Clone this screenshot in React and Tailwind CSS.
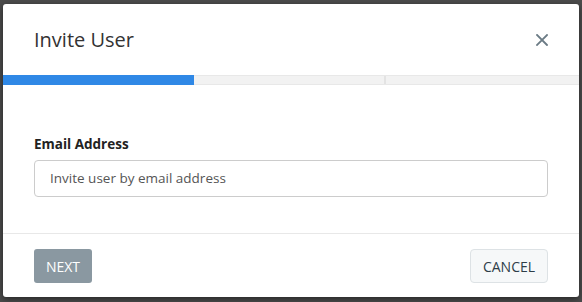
import React from "react";

export default function App() {
  return (
    <div className="w-[582px] h-[302px] bg-[#4b4b4b] pt-[4px] pl-[3px] overflow-hidden" style={{ fontFamily: '"Open Sans", sans-serif' }}>
      <div className="w-[576px] h-[293px] bg-white rounded-[3px] flex flex-col shadow-[0_2px_6px_rgba(0,0,0,0.5)]">
        <div className="h-[71px] flex items-center justify-between pl-[31px] pr-[30px]">
          <h1 className="text-[20px] font-normal text-[#333] leading-none mt-[1px]">Invite User</h1>
          <button className="text-[#6b7b85] w-[14px] h-[14px] flex items-center justify-center">
            <svg width="12" height="12" viewBox="0 0 12 12" fill="none" stroke="currentColor" strokeWidth="1.8" strokeLinecap="square">
              <path d="M1 1L11 11M11 1L1 11" />
            </svg>
          </button>
        </div>
        <div className="h-[10px] flex bg-[#f2f2f2] border-y border-[#e8e8e8]">
          <div className="w-[191px] bg-[#2f88e6] -my-px"></div>
          <div className="w-[192px] border-r-2 border-[#e3e3e3]"></div>
          <div className="flex-1"></div>
        </div>
        <div className="flex-1 px-[31px] pt-[49px] border-b border-[#e8e8e8]">
          <label className="block text-[13.5px] font-bold text-[#222] leading-[20px]">Email Address</label>
          <div className="mt-[6px] h-[37px] w-[514px] border border-[#cccccc] rounded-[4px] flex items-center pl-[15px]">
            <span className="text-[13.5px] text-[#555]">Invite user by email address</span>
          </div>
        </div>
        <div className="h-[63px] flex items-start justify-between px-[31px] pt-[15px]">
          <button className="h-[34px] w-[58px] bg-[#8a98a1] rounded-[3px] text-white text-[14px] flex items-center justify-center">NEXT</button>
          <button className="h-[34px] w-[78px] bg-[#f6f8f9] border border-[#dde2e5] rounded-[4px] text-[#2e3d48] text-[14px] flex items-center justify-center">CANCEL</button>
        </div>
      </div>
    </div>
  );
}
